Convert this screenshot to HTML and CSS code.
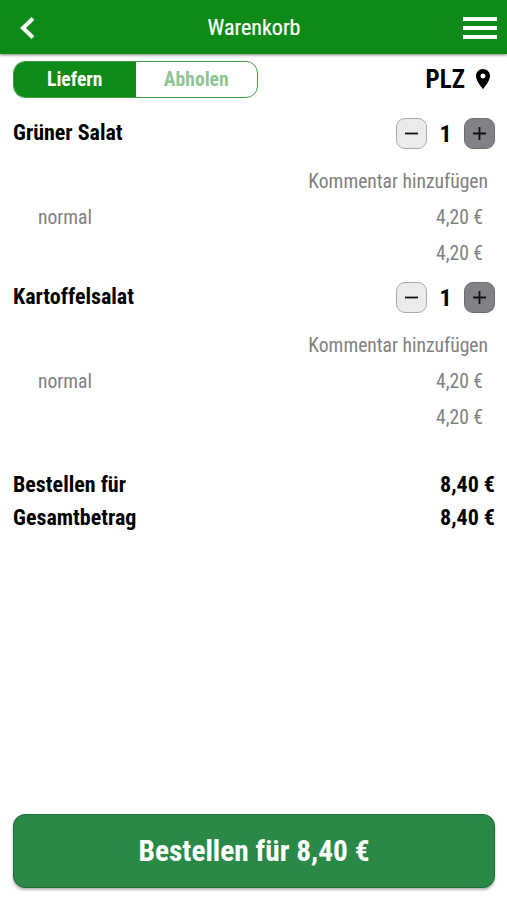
FILE: index.html
```html
<!DOCTYPE html>
<html lang="de">

<head>
    <title>Warenkorb</title>
    <meta charset="UTF-8">
    <meta name="viewport" content="width=device-width, initial-scale=1.0">
    <link rel="stylesheet" href="styles.css">
</head>

<body>
    <div class="header">
        <a class="back">
            <svg width="16" height="24" viewBox="0 0 16 24"><path d="M14 2.5 L4 12 L14 21.5" fill="none" stroke="#fff" stroke-width="4"/></svg>
        </a>
        <div class="title">Warenkorb</div>
        <a class="menu">
            <i></i>
            <i></i>
            <i></i>
        </a>
    </div>

    <div class="container">
        <div class="row options">
            <div class="switch">
                <a class="active">Liefern</a>
                <a>Abholen</a>
            </div>
            <div class="plz">
                <span>PLZ</span>
                <svg width="14" height="20" viewBox="5 2 14 20"><path d="M12 2C8.13 2 5 5.13 5 9c0 5.25 7 13 7 13s7-7.75 7-13c0-3.87-3.13-7-7-7zm0 9.5a2.5 2.5 0 0 1 0-5 2.5 2.5 0 0 1 0 5z"/></svg>
            </div>
        </div>

        <div class="item">
            <div class="row item-head">
                <div class="name">Grüner Salat</div>
                <div class="amount">
                    <a class="btn"><svg width="13" height="13" viewBox="0 0 13 13"><path d="M0 6.5h13"/></svg></a>
                    <b>1</b>
                    <a class="btn plus"><svg width="13" height="13" viewBox="0 0 13 13"><path d="M0 6.5h13M6.5 0v13"/></svg></a>
                </div>
            </div>
            <div class="comment">Kommentar hinzufügen</div>
            <div class="row line">
                <div>normal</div>
                <div>4,20 €</div>
            </div>
            <div class="row line">
                <div></div>
                <div>4,20 €</div>
            </div>
        </div>

        <div class="item">
            <div class="row item-head">
                <div class="name">Kartoffelsalat</div>
                <div class="amount">
                    <a class="btn"><svg width="13" height="13" viewBox="0 0 13 13"><path d="M0 6.5h13"/></svg></a>
                    <b>1</b>
                    <a class="btn plus"><svg width="13" height="13" viewBox="0 0 13 13"><path d="M0 6.5h13M6.5 0v13"/></svg></a>
                </div>
            </div>
            <div class="comment">Kommentar hinzufügen</div>
            <div class="row line">
                <div>normal</div>
                <div>4,20 €</div>
            </div>
            <div class="row line">
                <div></div>
                <div>4,20 €</div>
            </div>
        </div>

        <div class="total">
            <div class="row">
                <div>Bestellen für</div>
                <div>8,40 €</div>
            </div>
            <div class="row">
                <div>Gesamtbetrag</div>
                <div>8,40 €</div>
            </div>
        </div>

        <a class="order">Bestellen für 8,40 €</a>
    </div>
</body>

</html>
```

FILE: styles.css
```css
* {
    box-sizing: border-box;
}

body {
    margin: 0;
    height: 900px;
    display: flex;
    flex-direction: column;
    background-color: #fff;
    color: #000;
    font-family: "Roboto Condensed", Roboto, sans-serif;
    font-stretch: 75%;
    font-size: 22px;
}

svg {
    display: block;
}

.header {
    height: 54px;
    flex: none;
    padding: 2px 10px 0 19px;
    display: flex;
    align-items: center;
    justify-content: space-between;
    background-color: #0e8a19;
    box-shadow: 0 1px 3px rgba(0, 0, 0, .5);
    color: #fff;
}

.back,
.menu {
    width: 34px;
}

.title {
    padding: 0 8px 1px 0;
    -webkit-text-stroke: .2px #fff;
}

.menu i {
    display: block;
    height: 4px;
    margin: 5px 0;
    background-color: #fff;
}

.container {
    flex: 1;
    padding: 7px 12px 12px 13px;
    display: flex;
    flex-direction: column;
}

.row {
    display: flex;
    justify-content: space-between;
}

.options {
    height: 37px;
}

.switch {
    width: 245px;
    display: flex;
    border: 1px solid #3f9c46;
    border-radius: 12px;
    overflow: hidden;
    font-size: 19.6px;
    font-weight: bold;
}

.switch a {
    flex: 1;
    line-height: 35px;
    text-align: center;
    color: #8fc592;
}

.switch .active {
    background-color: #0e8a19;
    color: #fff;
}

.plz {
    display: flex;
    align-items: center;
    gap: 11px;
    padding-right: 5px;
    font-size: 25px;
    font-weight: bold;
}

.plz svg {
    margin-bottom: 2px;
}

.item {
    height: 164px;
    padding-top: 20px;
}

.item-head {
    height: 31px;
}

.name,
.total {
    font-weight: bold;
}

.name {
    line-height: 29px;
}

.amount {
    display: flex;
    align-items: center;
    font-size: 24px;
}

.amount b {
    width: 37px;
    text-align: center;
}

.btn {
    width: 31px;
    height: 31px;
    display: flex;
    align-items: center;
    justify-content: center;
    border: 1px solid #aaa;
    border-radius: 9px;
    background-color: #ebebeb;
}

.btn path {
    stroke: #111;
    stroke-width: 1.8;
}

.plus {
    border-color: #6c6d70;
    background-color: #808287;
}

.comment,
.line {
    height: 36px;
    line-height: 36px;
    font-size: 19.6px;
    color: #808080;
}

.comment {
    margin-top: 15px;
    padding-right: 7px;
    text-align: right;
}

.line {
    padding: 0 12px 0 25px;
}

.total {
    margin-top: 42px;
}

.total .row {
    height: 33px;
    line-height: 33px;
}

.order {
    height: 74px;
    margin-top: auto;
    border: 1px solid #1d6b35;
    border-radius: 12px;
    background-color: #2b8947;
    box-shadow: 0 2px 3px rgba(0, 0, 0, .3);
    color: #fff;
    font-size: 29.4px;
    font-weight: bold;
    line-height: 72px;
    text-align: center;
}
```
